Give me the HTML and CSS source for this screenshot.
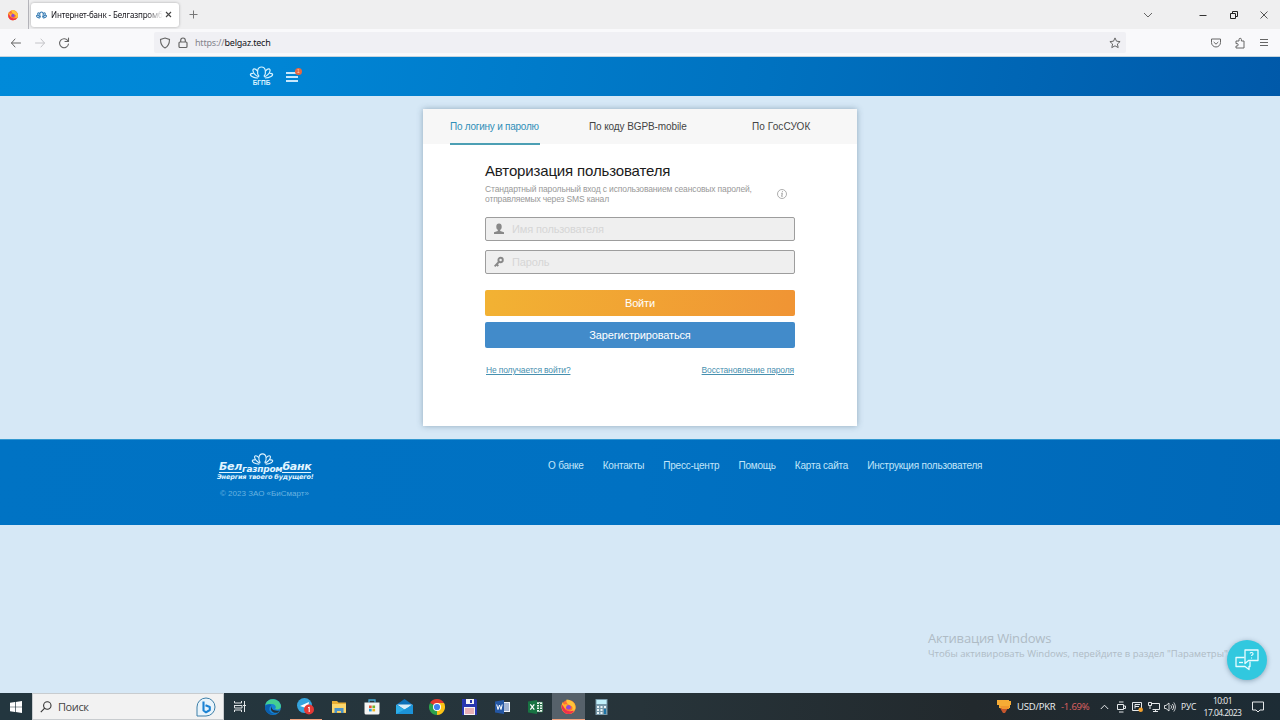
FILE: index.html
```html
<!DOCTYPE html>
<html lang="ru">
<head>
    <meta charset="UTF-8">
    <meta name="viewport" content="width=device-width, initial-scale=1.0">
    <title>Интернет-банк</title>
    <link rel="stylesheet" href="styles.css">
</head>
<body>
    <!-- Shared shapes -->
    <svg width="0" height="0" class="defs">
        <defs>
            <symbol id="lotus" viewBox="0 0 24 13">
                <g fill="none" stroke="currentColor" stroke-width="1.2">
                    <path d="M9.600 10.500C7 7.500 7.500 1 12 1S17 7.500 14.400 10.500"/>
                    <path d="M8 5C5.500 2 3 2.500 3.500 5S6 9.500 9.500 11M16 5C18.500 2 21 2.500 20.500 5S18 9.500 14.500 11"/>
                    <path d="M4 7.500C.5 7 0 9 2.500 10.500S6.500 12 8.500 12M20 7.500C23.500 7 24 9 21.500 10.500S17.500 12 15.500 12"/>
                </g>
            </symbol>
            <symbol id="lotus-bold" viewBox="0 0 24 18">
                <g fill="none" stroke="currentColor" stroke-width="2.3">
                    <path d="M9.600 14C7 9 7.500 2 12 2S17 9 14.400 14"/>
                    <path d="M8 6C5.500 3 3 4 3.500 7S6 12 9.500 14.500M16 6C18.500 3 21 4 20.500 7S18 12 14.500 14.500"/>
                    <path d="M4 9.500C0 9 0 12 2.500 14S6.500 16 8.500 16M20 9.500C24 9 24 12 21.500 14S17.500 16 15.500 16"/>
                </g>
            </symbol>
            <symbol id="firefox" viewBox="0 0 18 18">
                <circle cx="9" cy="9.500" r="7.500" fill="#ff7033"/>
                <path d="M3 4c0 2 1 3 2 3 2-1 4 0 5 2-2-1-4 0-4 2 0 3 6 4 7 0 1-4-2-5-1-8 3 2 5 4 4.500 8A7.500 7.500 0 0 1 2 11.500C1.200 8 2 6 3 4z" fill="#ffb52e"/>
                <path d="M2 7c-1 5 2 10 7 10 3 0 6-2 7-5-2 2-6 3-9 1-2-1-3-4-5-6z" fill="#f0304c"/>
                <circle cx="9" cy="9.800" r="2.500" fill="#9049d4"/>
                <path d="M7 1.500c4 0 8 3 9 8 0 3-1 4-2 5 1-4-1-6-4-7-2-1-4-3-3-6z" fill="#ffc53a"/>
            </symbol>
        </defs>
    </svg>

    <div class="tab-bar">
        <svg class="ff-small" width="12" height="12"><use href="#firefox"/></svg>
        <span class="tab-sep"></span>
        <div class="browser-tab">
            <svg class="tab-icon" width="11" height="8"><use href="#lotus-bold"/></svg>
            <span class="tab-title">Интернет-банк - Белгазпромб</span>
            <svg width="7" height="7" viewBox="0 0 7 7" stroke="#444" stroke-width="1.1"><path d="M1 1l5 5M6 1L1 6"/></svg>
        </div>
        <svg class="tab-plus" width="9" height="9" viewBox="0 0 9 9" stroke="#777"><path d="M4.500 .5v8M.5 4.500h8"/></svg>
        <div class="window-controls">
            <svg width="10" height="10" viewBox="0 0 10 10" fill="none" stroke="#666"><path d="M1 3l4 4 4-4"/></svg>
            <svg width="10" height="10" viewBox="0 0 10 10" stroke="#333"><path d="M1.500 5.500h7"/></svg>
            <svg width="10" height="10" viewBox="0 0 10 10" fill="none" stroke="#222"><path d="M1.500 3.500h5v5h-5zM3.500 3V1.500h5v5H7"/></svg>
            <svg width="10" height="10" viewBox="0 0 10 10" stroke="#555"><path d="M1.500 1.500l7 7M8.500 1.500l-7 7"/></svg>
        </div>
    </div>

    <div class="nav-bar">
        <div class="nav-buttons">
            <svg width="12" height="12" viewBox="0 0 12 12" fill="none" stroke="#666" stroke-linecap="round"><path d="M1.500 6h9M5 2L1.500 6 5 10"/></svg>
            <svg width="12" height="12" viewBox="0 0 12 12" fill="none" stroke="#c4c4c8" stroke-linecap="round"><path d="M1.500 6h9M7 2l3.500 4L7 10"/></svg>
            <svg width="12" height="12" viewBox="0 0 12 12" fill="none" stroke="#666" stroke-width="1.100" stroke-linecap="round"><path d="M10 4A4.500 4.500 0 1 0 10.500 7M10.500 1v3.500H7"/></svg>
        </div>
        <div class="url-bar">
            <svg width="12" height="12" viewBox="0 0 12 12" fill="none" stroke="#666" stroke-width="1.100"><path d="M6 1l4.500 1.500C10.500 7 9 9.500 6 11 3 9.500 1.500 7 1.500 2.500z"/></svg>
            <svg width="10" height="12" viewBox="0 0 10 12" fill="none" stroke="#666" stroke-width="1.200"><rect x="1" y="5" width="8" height="5.500" rx="1"/><path d="M2.700 5V3.300a2.300 2.300 0 0 1 4.600 0V5"/></svg>
            <span class="url">https://<b>belgaz.tech</b></span>
            <svg class="star" width="12" height="12" viewBox="0 0 12 12" fill="none" stroke="#666" stroke-linejoin="round"><path d="M6 .9l1.500 3.300 3.600.4-2.700 2.400.8 3.600L6 8.800l-3.200 1.800.8-3.600L.9 4.600l3.600-.4z"/></svg>
        </div>
        <div class="nav-tools">
            <svg width="12" height="12" viewBox="0 0 12 12" fill="none" stroke="#666"><path d="M1.500 2h9v3.500a4.500 4.500 0 0 1-9 0zM3.700 5L6 7.200 8.300 5"/></svg>
            <svg width="12" height="12" viewBox="0 0 12 12" fill="none" stroke="#666"><path d="M2 4h3V2.500a1.200 1.200 0 0 1 2.400 0V4H10v7H2V9h1a1.200 1.200 0 0 0 0-2.400H2z"/></svg>
            <svg width="12" height="12" viewBox="0 0 12 12" stroke="#666"><path d="M2 2.500h8M2 5.500h8M2 8.500h8"/></svg>
        </div>
    </div>

    <div class="site">
        <header class="site-header">
            <div class="brand">
                <svg width="25" height="13"><use href="#lotus"/></svg>
                <span>БГПБ</span>
            </div>
            <div class="menu">
                <i></i><i></i><i></i>
                <span class="menu-badge">1</span>
            </div>
        </header>

        <main class="main">
            <div class="card">
                <div class="card-tabs">
                    <a class="card-tab active">По логину и паролю</a>
                    <a class="card-tab mobile">По коду BGPB-mobile</a>
                    <a class="card-tab gos">По ГосСУОК</a>
                </div>
                <div class="card-body">
                    <h1>Авторизация пользователя</h1>
                    <div class="note">
                        <p>Стандартный парольный вход с использованием сеансовых паролей,<br>отправляемых через SMS канал</p>
                        <svg width="10" height="10" viewBox="0 0 10 10" fill="none" stroke="#999" stroke-width=".8"><circle cx="5" cy="5" r="4.500"/><path d="M5.500 2.300l-.1.900M4.300 4.300h1L4.700 7.400h.8" stroke-width="1"/></svg>
                    </div>
                    <div class="field">
                        <svg width="10" height="12" viewBox="0 0 10 12" fill="#888"><ellipse cx="5" cy="3.700" rx="2.700" ry="3.300"/><path d="M3.800 6h2.400v2L10 9.200V11H0V9.200L3.800 8z"/></svg>
                        <span>Имя пользователя</span>
                    </div>
                    <div class="field">
                        <svg width="10" height="12" viewBox="0 0 10 12" fill="none" stroke="#888" stroke-width="1.900"><circle cx="6.600" cy="4" r="2.200"/><path d="M5.300 5.500L.6 10.400M2.300 8l2 2"/></svg>
                        <span>Пароль</span>
                    </div>
                    <div class="btn btn-login">Войти</div>
                    <div class="btn btn-register">Зарегистрироваться</div>
                    <div class="links">
                        <a class="help">Не получается войти?</a>
                        <a class="restore">Восстановление пароля</a>
                    </div>
                </div>
            </div>
        </main>

        <footer class="site-footer">
            <div class="footer-brand">
                <div class="footer-logo">
                    <svg width="25" height="12"><use href="#lotus"/></svg>
                    <div class="logo-name">
                        <span class="logo-part">Бел</span>
                        <span class="logo-mid">газпром</span>
                        <span class="logo-part">банк</span>
                    </div>
                    <div class="logo-slogan">Энергия твоего будущего!</div>
                </div>
                <span class="copyright">© 2023 ЗАО «БиСмарт»</span>
            </div>
            <nav class="footer-nav">
                <a>О банке</a>
                <a>Контакты</a>
                <a>Пресс-центр</a>
                <a>Помощь</a>
                <a>Карта сайта</a>
                <a>Инструкция пользователя</a>
            </nav>
        </footer>

        <div class="watermark">
            <div class="watermark-title">Активация Windows</div>
            <div class="watermark-text">Чтобы активировать Windows, перейдите в раздел "Параметры"</div>
        </div>
        <div class="chat">
            <svg width="24" height="22" viewBox="0 0 24 22" fill="none" stroke="#e8fcff" stroke-width="1.300" stroke-linejoin="round">
                <path d="M9.500 8.500H1v9h9l4 3v-3h1v-5"/>
                <path d="M10 1h13v10.500h-9.500L10 14.500z"/>
                <path d="M4 13.500h4"/>
                <path d="M15 4.500c.5-1.500 3.500-1.200 3 .6-.3 1-1.500 1-1.500 2M16.500 8.500v1" stroke-width="1.100"/>
            </svg>
        </div>
    </div>

    <div class="taskbar">
        <div class="start">
            <svg width="12" height="12" viewBox="0 0 12 12" fill="#fff"><path d="M0 1.700l5-.7v4.700H0zM5.700.9L12 0v5.700H5.700zM0 6.300h5V11l-5-.7zM5.700 6.300H12V12l-6.300-.9z"/></svg>
        </div>
        <div class="search">
            <svg width="12" height="12" viewBox="0 0 12 12" fill="none" stroke="#333" stroke-width="1.100"><circle cx="7.300" cy="4.500" r="3.700"/><path d="M4.700 7.200L.8 11.200"/></svg>
            <span>Поиск</span>
            <svg class="bing" width="20" height="20" viewBox="0 0 20 20"><path d="M1 19V10a9 9 0 1 1 9 9z" fill="#e9f4fb" stroke="#3c7fa8"/><path d="M7.500 4.500v9l2.500 1.800 3.800-2.300V10L9.500 8.300" fill="none" stroke="#1c83d4" stroke-width="2.100" stroke-linejoin="round"/></svg>
        </div>
        <div class="apps">
            <div class="app"><svg width="13" height="11" viewBox="0 0 13 11" fill="none" stroke="#e0e4e6"><path d="M.5 0v2h7V0M.5 11V9h7v2M0 4.500h8v2.500H.5V4.500M10.500 0v11M9 4.500h3"/></svg></div>
            <div class="app"><svg width="16" height="16" viewBox="0 0 16 16"><circle cx="8" cy="8" r="8" fill="#1684d5"/><path d="M.3 6C2-1.500 14-2 16 7c0 3-3 4-6 3 2-2 0-5-3-5-3 0-5 .3-6.700 1z" fill="#44cf92"/><path d="M6.500 6c-5 4-1 10 6 8.500C8 17-1 15 .1 7.500 1.500 5 5 4.500 6.500 6z" fill="#0b5fae"/><path d="M7 7c-1.500 3 2 5.500 7.500 4.500l-1.500 2C8 15 4 11 7 7z" fill="#243238"/></svg></div>
            <div class="app telegram"><svg width="18" height="17" viewBox="0 0 18 17"><circle cx="7.500" cy="7.500" r="7.500" fill="#35a4de"/><path d="M3 8l9-4-1.500 8-3-2.500z" fill="#fff"/><circle cx="12" cy="11.500" r="5" fill="#e53935"/><path d="M11 10l1.200-1v5" fill="none" stroke="#fff"/></svg></div>
            <div class="app"><svg width="16" height="14" viewBox="0 0 16 14"><path d="M1 1h5l1.500 1.500H15V13H1z" fill="#e8ae35"/><path d="M1 4h14v8.500H1z" fill="#fbd66c"/><path d="M3.500 13V8h9v5h-2.500v-2H6v2z" fill="#4b93c8"/></svg></div>
            <div class="app"><svg width="16" height="16" viewBox="0 0 16 16"><path d="M5 3.500V1h6v2.500" fill="none" stroke="#45add8" stroke-width="1.300"/><path d="M.5 3.500h15V14a1.500 1.500 0 0 1-1.500 1.500H2A1.500 1.500 0 0 1 .5 14z" fill="#f4f5f3"/><path d="M5 6.500h2.700v2.600H5z" fill="#e85532"/><path d="M8.400 6.500h2.700v2.600H8.400z" fill="#70b52a"/><path d="M5 9.800h2.700v2.600H5z" fill="#289ed9"/><path d="M8.400 9.800h2.700v2.600H8.400z" fill="#f2b71a"/></svg></div>
            <div class="app"><svg width="17" height="15" viewBox="0 0 17 15"><path d="M0 6l8.500-6L17 6v9H0z" fill="#0c70b8"/><path d="M1 5.500h15L9 11z" fill="#d8edf8"/><path d="M0 5.500l8.500 5L17 5.500V15H0z" fill="#2daee8"/><path d="M0 15l17-9v9z" fill="#1c93d8"/></svg></div>
            <div class="app"><svg width="16" height="16" viewBox="0 0 16 16"><path d="M8 8L1.070 4A8 8 0 0 1 14.930 4z" fill="#e33b2e"/><path d="M8 8L14.930 4A8 8 0 0 1 8 16z" fill="#fbc316"/><path d="M8 8v8A8 8 0 0 1 1.070 4z" fill="#2ca24c"/><path d="M8 4h7l.5 1.500L11 8z" fill="#fbc316"/><circle cx="8" cy="8" r="4" fill="#fff"/><circle cx="8" cy="8" r="3.100" fill="#3f82ed"/></svg></div>
            <div class="app"><svg width="15" height="16" viewBox="0 0 15 16"><path d="M0 0h14l1 1v15H0z" fill="#2835af"/><path d="M4 0h8v5H4zM2 8h11v8H2z" fill="#f5f3f6"/><path d="M8 1h2v3H8z" fill="#2835af"/><path d="M3 10h9M3 12h9M3 14h9" stroke="#d96a75"/></svg></div>
            <div class="app"><svg width="15" height="14" viewBox="0 0 15 14"><path d="M8 2h7v10H8z" fill="#f0f4fa"/><path d="M9 4h5M9 6h5M9 8h5M9 10h5" stroke="#2c579a" stroke-width=".8"/><path d="M0 1.500L9 0v14l-9-1.500z" fill="#2457a4"/><path d="M1.700 4.500L3 9.500l1.500-4.500L6 9.500l1.200-5" stroke="#fff" fill="none"/></svg></div>
            <div class="app"><svg width="15" height="14" viewBox="0 0 15 14"><path d="M8 2h6.500v10H8z" fill="#f0f8f2" stroke="#217346" stroke-width=".6"/><path d="M9 4.500h5M9 7h5M9 9.500h5M11.500 3v8" stroke="#217346"/><path d="M0 1.500L9 0v14l-9-1.500z" fill="#187443"/><path d="M2.300 4.300l4 5.400M6.300 4.300l-4 5.400" stroke="#fff" stroke-width="1.200"/></svg></div>
            <div class="app active"><svg width="17" height="17"><use href="#firefox"/></svg></div>
            <div class="app"><svg width="13" height="16" viewBox="0 0 13 16"><path d="M.5 0h12v16H.5z" fill="#7899a9"/><path d="M1.500 1h10v4h-10z" fill="#c1f0fa"/><path d="M2 7h2v2H2zM5.500 7h2v2h-2zM9 7h2v2H9zM2 10h2v2H2zM5.500 10h2v2h-2zM2 13h2v2H2zM5.500 13h2v2h-2z" fill="#e9f3f7"/><path d="M9 10h2v5H9z" fill="#1b73a7"/></svg></div>
        </div>
        <div class="tray">
            <svg width="16" height="15" viewBox="0 0 16 15"><path d="M1 1h12v1h2v4h-1v3H3V6H1z" fill="#f6ab35"/><path d="M4 9h8l-3 5H7z" fill="#c5562d"/><path d="M4 7h9v3H6z" fill="#f0962e"/></svg>
            <span class="pair">USD/PKR</span>
            <span class="rate">-1.69%</span>
            <svg class="chevron" width="9" height="6" viewBox="0 0 9 6" fill="none" stroke="#e5e8ea"><path d="M.8 5L4.500 1.200 8.200 5"/></svg>
            <svg class="cam" width="9" height="12" viewBox="0 0 9 12" fill="none" stroke="#e5e8ea"><path d="M2 1h4.500M.5 3.500h6v5h-6zM6.500 5H8.500v2.500h-2M2 11h4.500"/></svg>
            <svg class="update" width="12" height="12" viewBox="0 0 12 12" fill="none" stroke="#e5e8ea"><path d="M.5 1.500h9v8h-9zM3 7.500v-4h5M3 5.500h4"/><circle cx="8.700" cy="8.700" r="2.300" fill="#f4a22e" stroke="none"/></svg>
            <svg class="net" width="12" height="12" viewBox="0 0 12 12" fill="none" stroke="#e5e8ea"><path d="M3.500 2.500h8v6h-7M7.500 8.500V11M5 10.500h5M.5 1.500h3v3h-3zM2 4.500V8"/></svg>
            <svg class="sound" width="12" height="12" viewBox="0 0 12 12" fill="none" stroke="#e5e8ea"><path d="M.5 4.500H2L5 2v8L2 7.500H.5zM6.800 4.300c1 1 1 2.400 0 3.400M8.300 3c1.700 2 1.700 4 0 6M9.800 1.500c2 3 2 6 0 9" stroke-width=".9"/></svg>
            <span class="lang">РУС</span>
            <div class="clock">
                <span>10:01</span>
                <span class="date">17.04.2023</span>
            </div>
            <svg class="notice" width="12" height="12" viewBox="0 0 12 12" fill="none" stroke="#e5e8ea"><path d="M.5 1h11v8H8l-2 2-2-2H.5z"/></svg>
        </div>
    </div>
</body>
</html>
```

FILE: styles.css
```css
* {
    box-sizing: border-box;
}
body {
    margin: 0;
    width: 1280px;
    height: 720px;
    overflow: hidden;
    display: flex;
    flex-direction: column;
    background-color: #d6e8f6;
    font-family: "Liberation Sans", Arial, sans-serif;
    white-space: nowrap;
}
svg {
    display: block;
    flex-shrink: 0;
}
.defs {
    position: absolute;
}

/* Browser */
.tab-bar {
    height: 29px;
    flex-shrink: 0;
    display: flex;
    align-items: center;
    padding-left: 7px;
    background-color: #efeff0;
    font-family: "Noto Sans", sans-serif;
}
.tab-sep {
    width: 1px;
    height: 29px;
    margin-left: 9px;
    background-color: #b5b5bb;
}
.browser-tab {
    width: 148px;
    height: 24px;
    margin-left: 2px;
    padding: 0 7px 0 5px;
    display: flex;
    align-items: center;
    background-color: #fff;
    border-radius: 3px;
    box-shadow: 0 0 3px rgba(0, 0, 0, 0.3);
}
.tab-icon {
    color: #2c75b0;
}
.tab-title {
    width: 112px;
    margin: 0 2px 0 4px;
    font-size: 8px;
    letter-spacing: -0.15px;
    color: #15141a;
    -webkit-mask-image: linear-gradient(to right, #000 85%, transparent);
    mask-image: linear-gradient(to right, #000 85%, transparent);
}
.tab-plus {
    margin-left: 10px;
}
.window-controls {
    display: flex;
    width: 127px;
    margin-left: auto;
    margin-right: 10px;
}
.window-controls svg:nth-child(2) {
    margin-left: 45px;
}
.window-controls svg:nth-child(3) {
    margin-left: 21px;
}
.window-controls svg:nth-child(4) {
    margin-left: 20px;
}
.nav-bar {
    height: 28px;
    flex-shrink: 0;
    display: flex;
    align-items: center;
    padding: 0 10px;
    background-color: #f9f9fb;
    border-bottom: 1px solid #c5d5df;
}
.nav-buttons {
    display: flex;
    gap: 12px;
    width: 144px;
}
.url-bar {
    width: 972px;
    height: 21px;
    padding: 0 5px;
    display: flex;
    align-items: center;
    gap: 7px;
    background-color: #f0f0f4;
    border-radius: 2px;
}
.url {
    font-family: "Noto Sans", sans-serif;
    font-size: 9px;
    letter-spacing: -0.2px;
    color: #85858d;
}
.url b {
    font-weight: normal;
    color: #15141a;
}
.star {
    margin-left: auto;
}
.nav-tools {
    display: flex;
    gap: 12px;
    margin-left: auto;
}

/* Site */
.site {
    height: 636px;
    display: flex;
    flex-direction: column;
    position: relative;
}
.site-header {
    height: 39px;
    display: flex;
    padding: 9px 0 0 249px;
    background: linear-gradient(100deg, #008ad9 0%, #0086d6 20%, #0072c0 60%, #0059a9 100%);
}
.brand {
    width: 25px;
    display: flex;
    flex-direction: column;
    align-items: center;
    color: #d8f3ff;
}
.brand span {
    font-size: 6.5px;
    line-height: 7px;
    font-weight: bold;
}
.menu {
    width: 12px;
    margin: 6px 0 0 12px;
    position: relative;
}
.menu i {
    display: block;
    height: 2px;
    margin-bottom: 2px;
    background-color: #c8e8fc;
}
.menu-badge {
    position: absolute;
    top: -4px;
    left: 9px;
    width: 7px;
    height: 7px;
    border-radius: 50%;
    background-color: #e8673f;
    color: #ffd0b8;
    font-size: 5px;
    line-height: 7px;
    text-align: center;
}
.main {
    height: 343px;
    padding-top: 13px;
}
.card {
    width: 434px;
    height: 317px;
    margin: 0 auto;
    background-color: #fff;
    box-shadow: 0 0 6px rgba(60, 90, 120, 0.45);
}
.card-tabs {
    height: 35px;
    display: flex;
    padding-left: 27px;
    background-color: #f7f7f7;
}
.card-tab {
    height: 36px;
    font-size: 10px;
    line-height: 35px;
    color: #444;
}
.card-tab.active {
    width: 90px;
    letter-spacing: -0.24px;
    color: #2f8fb8;
    border-bottom: 2px solid #4c9fb4;
}
.card-tab.mobile {
    width: 98px;
    margin-left: 49px;
    letter-spacing: -0.1px;
}
.card-tab.gos {
    margin-left: 65px;
    letter-spacing: 0.1px;
}
.card-body {
    width: 310px;
    margin: 0 auto;
    padding-top: 17px;
}
h1 {
    margin: 0;
    font-size: 15px;
    line-height: 20px;
    letter-spacing: -0.15px;
    font-weight: normal;
    color: #1b1b1b;
}
.note {
    height: 36px;
    display: flex;
    justify-content: space-between;
    padding: 3px 8px 0 0;
}
.note p {
    margin: 0;
    font-size: 8.500px;
    line-height: 10px;
    letter-spacing: -0.15px;
    color: #999;
}
.note svg {
    margin-top: 5px;
}
.field {
    height: 24px;
    margin-bottom: 9px;
    padding-left: 8px;
    display: flex;
    align-items: center;
    gap: 8px;
    background-color: #efefef;
    border: 1px solid #9d9d9d;
    border-radius: 2px;
    font-size: 11px;
    letter-spacing: -0.15px;
    color: #d6d6d6;
}
.btn {
    height: 26px;
    border-radius: 2px;
    font-size: 11px;
    line-height: 26px;
    letter-spacing: -0.15px;
    text-align: center;
    color: #fff;
}
.btn-login {
    margin-top: 16px;
    background: linear-gradient(100deg, #f2b233, #f09434);
}
.btn-register {
    margin-top: 6px;
    background-color: #428bca;
}
.links {
    display: flex;
    justify-content: space-between;
    padding: 17px 1px 0;
    font-size: 8.500px;
    line-height: 10px;
    letter-spacing: -0.15px;
    text-decoration: underline;
    color: #4790af;
}
.site-footer {
    height: 86px;
    display: flex;
    padding-left: 217px;
    border-top: 1px solid #3298d0;
    background: linear-gradient(95deg, #0073c4, #0071c2 50%, #0068b8);
}
.footer-brand {
    width: 330px;
    padding-top: 13px;
    color: #e1f5ff;
}
.footer-logo {
    width: 97px;
    font-family: "DejaVu Sans", sans-serif;
    font-weight: bold;
    font-style: italic;
}
.footer-logo svg {
    margin-left: 33px;
}
.logo-name {
    height: 11px;
    margin-top: -3px;
    padding-left: 2px;
    display: flex;
}
.logo-part {
    height: 11px;
    font-size: 11px;
    line-height: 10px;
    letter-spacing: -0.3px;
    border-bottom: 1px solid;
}
.logo-mid {
    padding-top: 3px;
    font-size: 9px;
    line-height: 9px;
    letter-spacing: -0.25px;
}
.logo-slogan {
    font-size: 6.500px;
    line-height: 8px;
    letter-spacing: -0.15px;
}
.copyright {
    display: block;
    margin: 8px 0 0 3px;
    font-size: 8px;
    line-height: 10px;
    color: #69b3e0;
}
.footer-nav {
    display: flex;
    gap: 19px;
    padding: 20px 0 0 1px;
    font-size: 10px;
    line-height: 12px;
    letter-spacing: -0.21px;
    color: #c2e6fa;
}
.watermark {
    margin: 104px 0 0 928px;
    font-family: "Open Sans", sans-serif;
    color: #afbbc5;
}
.watermark-title {
    font-size: 13px;
    line-height: 18px;
    letter-spacing: -0.18px;
}
.watermark-text {
    font-size: 9.500px;
    line-height: 13px;
}
.chat {
    position: absolute;
    left: 1227px;
    top: 583px;
    width: 40px;
    height: 40px;
    display: flex;
    align-items: center;
    justify-content: center;
    border-radius: 50%;
    background-color: #31c8df;
    box-shadow: 0 1px 5px rgba(0, 40, 70, 0.35);
}

/* Taskbar */
.taskbar {
    height: 27px;
    flex-shrink: 0;
    display: flex;
    background: linear-gradient(to right, #23363f, #27343a 50%, #22292d 76%, #1d2c35);
    font-family: "Open Sans", sans-serif;
    color: #eef1f2;
}
.start {
    width: 32px;
    display: flex;
    align-items: center;
    justify-content: center;
}
.search {
    width: 192px;
    padding: 0 7px;
    display: flex;
    align-items: center;
    gap: 6px;
    background-color: #f2f2f2;
    border: 1px solid #c8cccf;
    font-size: 11px;
    letter-spacing: -0.4px;
    color: #444;
}
.bing {
    margin-left: auto;
}
.apps {
    display: flex;
}
.app {
    width: 32.800px;
    display: flex;
    align-items: center;
    justify-content: center;
}
.app.telegram,
.app.active {
    border-bottom: 1px solid #f2a27d;
}
.app.active {
    background-color: #56616a;
}
.tray {
    width: 284px;
    margin-left: auto;
    display: flex;
    align-items: center;
    font-size: 9.500px;
    letter-spacing: -0.2px;
}
.pair {
    width: 37px;
    margin-left: 5px;
}
.rate {
    width: 28px;
    margin-left: 7px;
    color: #e26363;
}
.chevron {
    margin-left: 11px;
}
.cam {
    margin-left: 8px;
}
.update {
    margin-left: 6px;
}
.net {
    margin-left: 4px;
}
.sound {
    margin-left: 4px;
}
.lang {
    width: 15px;
    margin-left: 5px;
    font-size: 8.500px;
}
.clock {
    width: 37px;
    margin-left: 8px;
    display: flex;
    flex-direction: column;
    align-items: center;
    font-size: 8.500px;
    line-height: 12px;
    letter-spacing: -0.55px;
}
.notice {
    margin-left: 11px;
}
```
